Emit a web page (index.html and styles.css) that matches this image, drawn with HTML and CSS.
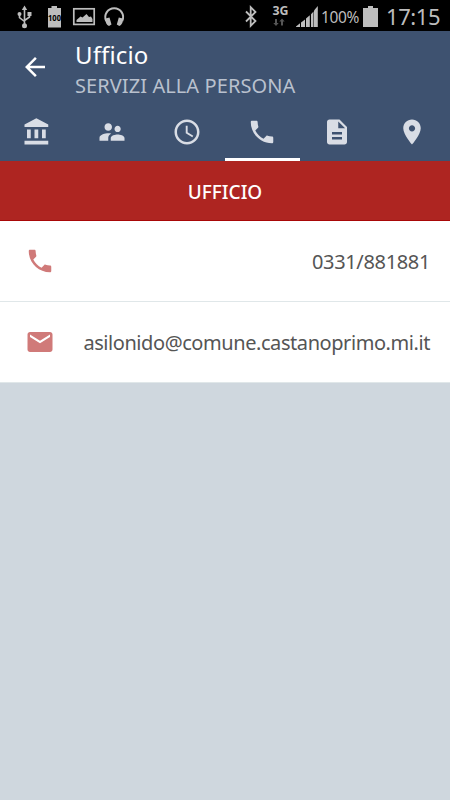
FILE: index.html
```html
<!DOCTYPE html>
<html lang="it">
<head>
<meta charset="utf-8">
<title>Ufficio</title>
<link rel="stylesheet" href="styles.css">
</head>
<body>
<div class="status">
  <svg class="status-icons" width="130" height="31" viewBox="0 0 130 31">
    <g fill="none" stroke="#bdbdbd" stroke-width="1.6">
      <path d="M24.5 9v16M19.5 14v3.5l5 4M29.5 14v3l-5 3.5"/>
      <rect x="73.8" y="8.8" width="20.4" height="15.6" stroke-width="1.7"/>
      <path d="M106.2 21a8.9 8.9 0 1 1 16 0" stroke-width="2"/>
    </g>
    <g fill="#bdbdbd">
      <path d="M24.5 5.5l2.7 4.5h-5.4z"/>
      <circle cx="24.5" cy="25.8" r="2.5"/>
      <circle cx="19.5" cy="14" r="2"/>
      <path d="M27.5 12h4v4h-4z"/>
      <path d="M51.5 6h5.500v2h4v19.500H48V8h3.500z"/>
      <path d="M76.500 22v-2l4-3.500 2 1 4-3.500 2.500 3 2-.5 1.500 2.500v3z"/>
      <path d="M105.500 18.500l4-1 2 7-2.500 1.500c-2.500-1-4-4-3.500-7.500zM122.800 18.500l-4-1-2 7 2.500 1.500c2.500-1 4-4 3.500-7.500z"/>
    </g>
    <text class="battery-label" x="54.500" y="20.800" text-anchor="middle" textLength="13" lengthAdjust="spacingAndGlyphs">100</text>
  </svg>
  <svg class="status-icons" width="86" height="31" viewBox="0 0 86 31">
    <path d="M2 11.500l9.500 9.500-4.800 4.800V7.200l4.800 4.800L2 21.500" fill="none" stroke="#bdbdbd" stroke-width="1.800"/>
    <text class="network" x="28.500" y="15" textLength="16" lengthAdjust="spacingAndGlyphs">3G</text>
    <path d="M31 19h2v4h1.700L32 26l-2.700-3H31zM37 25.500h2v-4h1.700L38 18.500l-2.700 3H37z" fill="#555"/>
    <path d="M52 27h4v-3.700L52 26.500zM57 27h4v-7.500L57 22.500zM62 27h3.800V15.300L62 18.500zM67 27h2.500V11.500L67 14.200z" fill="#bdbdbd"/>
    <path d="M70 27h3.800V6L70 10.500z" fill="#bdbdbd"/>
  </svg>
  <span class="percent">100%</span>
  <svg class="battery" width="15" height="21" viewBox="0 0 15 21"><path d="M5 0h5v2h5v19H0V2h5z" fill="#bdbdbd"/></svg>
  <span class="time">17:15</span>
</div>
<header class="appbar">
  <div class="toolbar">
    <svg class="back" width="30" height="30" viewBox="0 0 24 24" fill="#fff"><path d="M20 11H7.830l5.590-5.590L12 4l-8 8 8 8 1.410-1.410L7.830 13H20v-2z"/></svg>
    <div class="titles">
      <h1>Ufficio</h1>
      <p>SERVIZI ALLA PERSONA</p>
    </div>
  </div>
  <nav class="tabs">
    <div class="tab"><svg viewBox="0 0 24 24"><path d="M4 10v7h3v-7H4zm6 0v7h3v-7h-3zM2 22h19v-3H2v3zm14-12v7h3v-7h-3zm-4.500-9L2 6v2h19V6l-9.500-5z"/></svg></div>
    <div class="tab"><svg viewBox="0 0 24 24"><path d="M16.500 12c1.380 0 2.490-1.120 2.490-2.500S17.880 7 16.500 7 14 8.120 14 9.500s1.120 2.500 2.500 2.500zM9 11c1.660 0 2.990-1.340 2.990-3S10.660 5 9 5 6 6.340 6 8s1.340 3 3 3zm7.500 3c-1.830 0-5.500.920-5.500 2.750V19h11v-2.250c0-1.830-3.670-2.750-5.500-2.750zM9 13c-2.330 0-7 1.170-7 3.500V19h7v-2.250c0-.850.330-2.340 2.370-3.470C10.500 13.100 9.660 13 9 13z"/></svg></div>
    <div class="tab"><svg viewBox="0 0 24 24"><path d="M11.990 2C6.470 2 2 6.480 2 12s4.470 10 9.990 10C17.520 22 22 17.520 22 12S17.520 2 11.990 2zM12 20c-4.420 0-8-3.580-8-8s3.580-8 8-8 8 3.580 8 8-3.580 8-8 8zm.5-13H11v6l5.250 3.150.750-1.230-4.500-2.670V7z"/></svg></div>
    <div class="tab active"><svg viewBox="0 0 24 24"><path d="M6.620 10.790c1.440 2.830 3.760 5.140 6.590 6.590l2.200-2.200c.270-.270.670-.360 1.020-.240 1.120.370 2.330.570 3.570.570.550 0 1 .450 1 1V20c0 .550-.450 1-1 1-9.390 0-17-7.610-17-17 0-.550.450-1 1-1h3.500c.550 0 1 .450 1 1 0 1.250.200 2.450.570 3.570.110.350.030.740-.250 1.020l-2.200 2.200z"/></svg></div>
    <div class="tab"><svg viewBox="0 0 24 24"><path d="M14 2H6c-1.100 0-1.990.900-1.990 2L4 20c0 1.100.890 2 1.990 2H18c1.100 0 2-.900 2-2V8l-6-6zm2 16H8v-2h8v2zm0-4H8v-2h8v2zm-3-5V3.500L18.500 9H13z"/></svg></div>
    <div class="tab"><svg viewBox="0 0 24 24"><path d="M12 2C8.130 2 5 5.130 5 9c0 5.250 7 13 7 13s7-7.750 7-13c0-3.870-3.130-7-7-7zm0 9.500c-1.380 0-2.500-1.120-2.500-2.500s1.120-2.500 2.500-2.500 2.500 1.120 2.500 2.500-1.120 2.500-2.500 2.500z"/></svg></div>
  </nav>
</header>
<main>
  <h2 class="section"><span>UFFICIO</span></h2>
  <div class="row">
    <svg viewBox="0 0 24 24"><path d="M6.620 10.790c1.440 2.830 3.760 5.140 6.590 6.590l2.200-2.200c.270-.270.670-.360 1.020-.240 1.120.370 2.330.570 3.570.570.550 0 1 .450 1 1V20c0 .550-.450 1-1 1-9.390 0-17-7.610-17-17 0-.550.450-1 1-1h3.500c.550 0 1 .450 1 1 0 1.250.200 2.450.570 3.570.110.350.030.740-.250 1.020l-2.200 2.200z"/></svg>
    <span class="phone">0331/881881</span>
  </div>
  <div class="row">
    <svg viewBox="0 0 24 24"><path d="M20 4H4c-1.100 0-1.990.900-1.990 2L2 18c0 1.100.900 2 2 2h16c1.100 0 2-.900 2-2V6c0-1.100-.900-2-2-2zm0 4l-8 5-8-5V6l8 5 8-5v2z"/></svg>
    <span class="email">asilonido@comune.castanoprimo.mi.it</span>
  </div>
</main>
</body>
</html>
```

FILE: styles.css
```css
* { box-sizing: border-box; }
body {
  margin: 0;
  min-height: 800px;
  background: #cfd7de;
  font-family: "Noto Sans", sans-serif;
}
h1, h2, p { margin: 0; font-weight: 400; }
svg { display: block; flex: none; }
.status {
  display: flex;
  align-items: center;
  height: 31px;
  background: #000;
  color: #bdbdbd;
}
.status-icons { overflow: visible; }
.status-icons + .status-icons { margin-left: 114px; }
.battery-label { font: 700 9px "Noto Sans", sans-serif; fill: #000; }
.network { font: 700 11.500px "Noto Sans", sans-serif; fill: #bdbdbd; }
.percent { width: 42px; margin-left: -9px; font-size: 15.500px; letter-spacing: -0.350px; padding-top: 2px; white-space: nowrap; }
.battery { margin-top: 1px; }
.time { margin-left: 8px; font-size: 22px; letter-spacing: -0.400px; padding-top: 1px; }
.appbar { height: 130px; background: #3e5270; }
.toolbar { display: flex; height: 71px; padding-left: 20px; }
.back { margin-top: 21px; }
.titles { margin-left: 25px; padding-top: 7px; white-space: nowrap; }
h1 { color: #fff; font-size: 24px; line-height: 34px; letter-spacing: 0.150px; }
.titles p { color: #b9c1ce; font-size: 20px; line-height: 28px; letter-spacing: 0.080px; }
.tabs { display: grid; grid-template-columns: repeat(6, 75px); height: 59px; }
.tab { display: flex; justify-content: center; padding: 15px 1px 0 0; }
.tab svg { width: 30px; height: 30px; fill: #d9dde5; }
.tab.active { border-bottom: 3px solid #fff; }
.section {
  display: flex;
  align-items: center;
  justify-content: center;
  height: 60px;
  padding-top: 2px;
  background: #ae2521;
  border-bottom: 1px solid #a80808;
  color: #fff;
  font-size: 19px;
  font-weight: 500;
}
.row {
  display: flex;
  align-items: center;
  justify-content: space-between;
  height: 81px;
  padding: 0 20px 0 25px;
  background: #fff;
  border-bottom: 1px solid #e0e7e9;
  color: #555;
  font-size: 20px;
}
.row svg { width: 30px; height: 30px; fill: #d07a79; }
.phone { padding-top: 1px; letter-spacing: -0.350px; }
.email { padding-top: 1px; letter-spacing: -0.430px; }
```
